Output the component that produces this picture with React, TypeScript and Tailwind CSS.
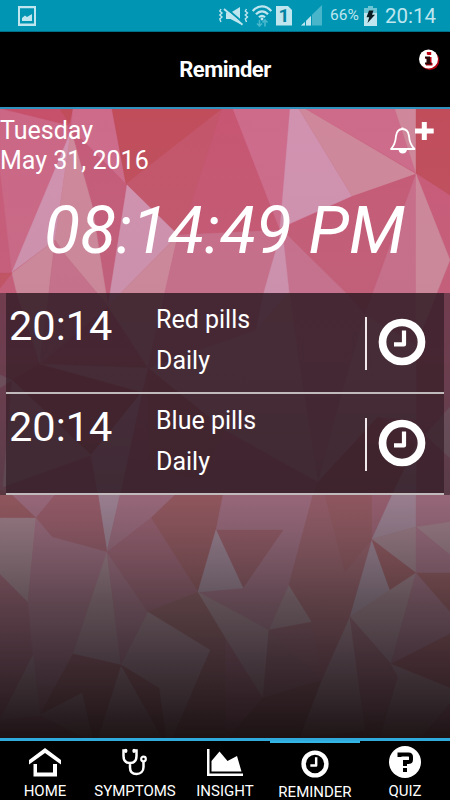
import React from 'react';

const RED = '#c14d5b';
const ROSE = '#c95a78';
const PINK = '#ce6b8b';
const GREY = '#cf889b';
const LILAC = '#d192b0';

// Facets of the low-poly wallpaper: [fill, points]
const facets: [string, string][] = [
  ['#cc6786', '0,109 67,125 70,135 12,273 0,170'],
  ['#c7506a', '5,109 60,109 68,125'],
  ['#c14d5b', '60,109 73,109 69,124'],
  [PINK, '73,109 112,109 126,184 71,128'],
  [RED, '112,109 222,109 126,184'],
  ['#c4556a', '222,109 126,184 178,235 188,214'],
  ['#c75672', '222,109 233,109 280,230 178,235 188,214'],
  ['#c55b79', '72,130 126,184 108,306 100,262'],
  [LILAC, '66,143 12,272 55,240 71,130'],
  [GREY, '71,130 92,205 108,306 66,256 55,240'],
  [GREY, '12,273 55,240 48,300 40,364 16,290'],
  ['#c44f5f', '0,273 12,273 0,288'],
  ['#c96f8b', '55,240 66,256 108,306 40,364 48,300'],
  [LILAC, '127,185 178,235 108,306'],
  [GREY, '178,235 108,306 148,368 165,292'],
  ['#c96d8a', '178,235 280,230 256,330 148,368 165,292'],
  [PINK, '233,109 290,109 280,230'],
  [LILAC, '290,109 299,109 352,196 280,228'],
  [GREY, '299,109 306,109 416,174 352,196'],
  [PINK, '306,109 395,109 416,173'],
  [GREY, '395,109 416,109 416,173'],
  [RED, '416,109 450,109 450,195 416,173'],
  ['#c65a76', '416,174 352,197 280,230 345,292 365,310'],
  ['#ca6d8a', '416,174 365,315 416,345'],
  [GREY, '416,174 450,260 416,345'],
  ['#c96f8d', '282,230 345,292 365,315 318,480 289,292'],
  [LILAC, '282,228 264,292 256,330 290,300'],
  [GREY, '256,330 289,292 305,400 318,482 225,430'],
  [GREY, '148,368 256,330 240,400 225,430'],
  ['#c4556a', '148,368 225,430 200,480 150,470'],
  [GREY, '365,315 378,417 318,482 350,365'],
  [GREY, '365,315 416,345 416,420 378,417'],
  [RED, '378,417 318,482 313,495 392,495 416,445'],
  [RED, '40,364 148,368 142,392 91,455 12,380'],
  [GREY, '40,364 148,368 142,392'],
  [GREY, '0,375 12,380 0,388'],
  [GREY, '12,380 91,455 3,487'],
  [LILAC, '142,392 91,455 98,495 107,552 120,495'],
  [GREY, '450,407 425,435 450,458'],
  [PINK, '10,495 55,495 36,518'],
  [RED, '0,490 12,495 36,518 0,518'],
  ['#c5526a', '55,495 98,495 107,552 52,537 36,518'],
  [GREY, '0,518 36,518 28,602 0,574'],
  [PINK, '36,518 52,537 107,552 73,654 40,715 33,655 28,602'],
  [PINK, '120,495 175,495 151,518 107,552'],
  [RED, '175,495 223,495 216,530 198,592 151,518'],
  [GREY, '107,552 121,665 73,654'],
  [PINK, '107,552 148,612 121,665'],
  [ROSE, '107,552 151,518 198,592 148,612'],
  ['#b95562', '148,612 198,592 225,637 225,738 172,738 210,650'],
  [GREY, '148,612 210,650 172,738 166,738 159,688 121,665'],
  [GREY, '121,665 98,738 162,738'],
  ['#b84e5e', '73,654 121,665 98,738 92,738 82,693 40,715'],
  ['#b84e5e', '121,665 159,688 166,738 162,738'],
  [GREY, '33,655 0,720 40,715'],
  [GREY, '82,693 40,715 85,738 92,738'],
  [PINK, '223,495 313,495 289,585 269,630 198,592 216,530'],
  ['#c25065', '216,530 283,530 243,588'],
  [LILAC, '216,530 198,592 243,588'],
  [GREY, '198,592 269,630 263,698 225,637'],
  ['#c4566a', '313,495 372,495 372,539 350,617 289,585'],
  ['#c14f5f', '325,495 372,495 372,539 345,572'],
  [GREY, '289,585 312,622 269,630'],
  ['#c25870', '269,630 312,622 322,680'],
  ['#c4566a', '289,585 350,617 322,680 312,622'],
  ['#bb5b72', '269,630 322,680 263,698'],
  ['#ad4857', '263,698 322,680 300,738 228,738'],
  [GREY, '350,617 365,730 300,738 322,680'],
  [ROSE, '372,495 392,495 372,539'],
  [LILAC, '392,495 416,445 416,527 372,539'],
  [GREY, '372,539 416,527 416,573'],
  [LILAC, '372,540 390,590 350,617'],
  [RED, '372,540 390,590 416,573'],
  [GREY, '416,573 390,590 350,617 391,664'],
  [PINK, '416,495 450,495 450,522 416,527'],
  [GREY, '416,527 450,522 450,555'],
  [PINK, '416,527 450,555 450,573 416,573'],
  [RED, '416,573 450,573 450,612'],
  [PINK, '416,573 450,612 450,634 391,664'],
  [RED, '450,634 391,664 450,688'],
  ['#c25c74', '350,617 391,664 398,677 380,738 365,730'],
  [GREY, '391,664 450,688 450,703 420,738 380,738 398,677'],
];

const reminders = [
  { time: '20:14', name: 'Red pills', repeat: 'Daily' },
  { time: '20:14', name: 'Blue pills', repeat: 'Daily' },
];

const Wallpaper: React.FC = () => (
  <svg
    className="absolute inset-0 h-full w-full"
    viewBox="0 109 450 629"
    preserveAspectRatio="none"
  >
    <defs>
      <linearGradient id="shade" gradientUnits="userSpaceOnUse" x1="0" y1="109" x2="0" y2="738">
        <stop offset="0" stopColor="#a89098" stopOpacity="0" />
        <stop offset="0.29" stopColor="#a08890" stopOpacity="0.12" />
        <stop offset="0.45" stopColor="#747c7c" stopOpacity="0.25" />
        <stop offset="0.62" stopColor="#4a5f5e" stopOpacity="0.43" />
        <stop offset="0.78" stopColor="#263331" stopOpacity="0.66" />
        <stop offset="0.87" stopColor="#222326" stopOpacity="0.8" />
        <stop offset="1" stopColor="#150f10" stopOpacity="0.95" />
      </linearGradient>
    </defs>
    <rect y="109" width="450" height="629" fill={ROSE} />
    {/* the stroke closes the hairline gaps between neighbours */}
    {facets.map(([fill, points]) => (
      <polygon key={points} points={points} fill={fill} stroke={fill} strokeWidth="0.4" />
    ))}
    <rect y="109" width="450" height="629" fill="url(#shade)" />
  </svg>
);

const ClockIcon: React.FC<{ className: string }> = ({ className }) => (
  <svg className={className} viewBox="0 0 48 48" fill="none" stroke="currentColor">
    <circle cx="24" cy="24" r="19.5" strokeWidth="7.7" />
    <path d="M26 12.6V26.4H16" strokeWidth="4.2" strokeLinejoin="round" />
  </svg>
);

const StatusBar: React.FC = () => (
  <div className="flex h-8 shrink-0 items-center border-b border-[#00708a] bg-[#0095b3] text-[#bfe6ee]">
    <svg className="ml-[18px] h-5 w-[18px]" viewBox="0 0 18 20">
      <path fill="currentColor" fillRule="evenodd" d="M0 0H18V20H0ZM2 2.2V17.6H16V2.2Z" />
      <path fill="currentColor" d="M4 15V12L7 9.5L9 11L14 8V15Z" />
    </svg>
    {/* muted, vibrating speaker */}
    <svg className="ml-[183px] h-5 w-[30px]" viewBox="0 0 30 20" fill="none" stroke="currentColor">
      <path
        strokeWidth="1.4"
        d="M2 3L.8 5L3 7L.8 9L3 11L.8 13L2 16M27.5 3L26.3 5L28.5 7L26.3 9L28.5 11L26.3 13L27.5 16"
      />
      <path fill="currentColor" stroke="none" d="M7 6.5V13H11.5L21 18V1L12 6.5Z" />
      <path stroke="#0095b3" strokeWidth="2" d="M7 2L25 17.5" />
      <path strokeWidth="1.8" d="M5 3L23.5 18.8" />
    </svg>
    <svg className="ml-[3px] h-[22px] w-5" viewBox="0 0 20 22" fill="none" stroke="currentColor">
      <path
        strokeWidth="2.2"
        d="M.7 6C6-.2 14-.2 19.3 6M4 9.3C7.5 5.3 12.5 5.3 16 9.3M7 12.3C9 10.3 11 10.3 13 12.3"
      />
      <circle cx="10" cy="14" r="1.4" fill="currentColor" stroke="none" />
      <path
        stroke="#48b8cd"
        strokeWidth="1.6"
        d="M7.5 15V21M5 18.5L7.5 21L10 18.5M13 21.5V15M10.5 17.5L13 15L15.5 17.5"
      />
    </svg>
    <div className="ml-1 flex h-5 w-4 items-center justify-center bg-[#bfe6ee] text-[19px] leading-none font-bold text-[#0083a2] [clip-path:polygon(0_0,72%_0,100%_22%,100%_100%,0_100%)]">
      1
    </div>
    <svg className="ml-[9px] h-[21px] w-[21px]" viewBox="0 0 21 21">
      <path fill="#48b5ca" d="M0 20.5L21 0V20.5Z" />
      <path fill="#0095b3" d="M4 0H5V21H4ZM10 0H11V21H10Z" />
      <path fill="currentColor" d="M0 20.5L4 17V20.5ZM5 20.5V16L10 11V20.5Z" />
    </svg>
    <span className="ml-2 w-[29px] pt-px text-[15.5px] leading-none whitespace-nowrap">66%</span>
    <svg className="ml-[5px] h-5 w-[13px]" viewBox="0 0 13 20">
      <path fill="#6cc5d5" d="M4 0H9V2H13V8H0V2H4Z" />
      <path fill="currentColor" d="M0 7H13V20H0Z" />
      <path fill="#0a1c22" d="M5 4.5H9.5L8 8.8H11L3.5 17L5.2 11.2H2.5Z" />
    </svg>
    <span className="ml-[8px] pt-px text-[20.5px] leading-none">20:14</span>
  </div>
);

const Header: React.FC = () => (
  <header className="relative flex h-[75px] shrink-0 items-center justify-center bg-black">
    <h1 className="text-[22px] leading-none font-bold tracking-[-0.5px] text-white">Reminder</h1>
    <svg className="absolute top-[17px] right-[10px] h-[22px] w-[22px]" viewBox="0 0 22 22">
      <circle cx="11.8" cy="11.5" r="9.5" fill="#b00010" />
      <circle cx="10.5" cy="10" r="9.5" fill="#fff" />
      <path fill="#c00010" d="M9.5 3H13.2V6H9.5ZM7.5 8H13.5V14H14.5V16.5H8V14H9.5V10H7.5Z" />
      <path fill="#28080a" d="M9.5 7.5H12V13.5H13.5V15.5H7V13.5H8.5V9.5H7V7.5Z" />
      <path fill="#c00010" d="M8.8 3H12V5.5H8.8Z" />
    </svg>
  </header>
);

const tabs = [
  {
    label: 'HOME',
    icon: (
      <svg className="h-[30px] w-8" viewBox="0 0 32 30" fill="#fff">
        <path d="M0 13L16 1L32 13V17.5L16 6L0 17.5Z" />
        <path d="M4.5 17H8V25.5H24V17H28V29.5H4.5Z" />
      </svg>
    ),
  },
  {
    label: 'SYMPTOMS',
    icon: (
      <svg className="mr-0.5 h-7 w-[26px]" viewBox="0 0 26 28" fill="none" stroke="#fff" strokeWidth="2.5">
        <path d="M6 2.5H2.5V8C2.5 12.5 5 15 9 15S15.5 12.5 15.5 8V2.5H12M9 15V19.5C9 24 11.5 26 15.500 26S22.500 23.500 22.500 19V13.500" />
        <circle cx="22.5" cy="11" r="2.3" strokeWidth="2.2" />
        <path strokeLinecap="round" strokeWidth="3.2" d="M4.8 2.3V3.3M13 2.3V3.3" />
      </svg>
    ),
  },
  {
    label: 'INSIGHT',
    icon: (
      <svg className="h-[27px] w-9" viewBox="0 0 36 27" fill="#fff">
        <path d="M0 0H2.5V24.5H36V27H0Z" />
        <path d="M4.5 12L12.5 2.5L20.5 12L30 7L34.5 22.5H4.5Z" />
      </svg>
    ),
  },
  { label: 'REMINDER', icon: <ClockIcon className="h-7 w-7 text-white" /> },
  {
    label: 'QUIZ',
    icon: (
      <svg className="h-8 w-8" viewBox="0 0 32 32">
        <circle cx="16" cy="16" r="16" fill="#fff" />
        <path
          fill="none"
          stroke="#000"
          strokeWidth="4"
          d="M10.5 11V8.5H19.5Q22 8.5 22 11V13.5Q22 16 19.5 16H16V20"
        />
        <path d="M14 22H18V26H14Z" />
      </svg>
    ),
  },
];

const TabBar: React.FC = () => (
  <nav className="grid h-[62px] shrink-0 grid-cols-5 border-t-[3px] border-[#30aada] bg-black">
    {tabs.map(({ label, icon }) => {
      const active = label === 'REMINDER';
      return (
        <div
          key={label}
          className={`flex flex-col items-center ${active ? 'border-t-2 border-[#33b5e5]' : ''}`}
        >
          <div className="flex h-[42px] items-center justify-center">{icon}</div>
          <span className={`text-[15px] leading-[18px] text-white ${active ? '-mt-0.5' : '-mt-px'}`}>
            {label}
          </span>
        </div>
      );
    })}
  </nav>
);

const App: React.FC = () => {
  return (
    <div className="flex h-[800px] w-[450px] flex-col overflow-hidden bg-black font-['Roboto',sans-serif]">
      <StatusBar />
      <Header />
      <main className="relative flex-1 overflow-hidden border-t-2 border-[#3193bd]">
        <Wallpaper />
        <div className="relative text-white">
          <div className="flex h-[68px] justify-between">
            <div className="pt-[7px] text-[25px] leading-[30px]">
              <p>Tuesday</p>
              <p>May 31, 2016</p>
            </div>
            {/* add reminder */}
            <svg className="mt-3 mr-[15px] h-[34px] w-[46px]" viewBox="0 0 46 34" fill="none" stroke="#fff">
              <path
                strokeWidth="1.8"
                strokeLinejoin="round"
                d="M2 28Q6.5 23 7 15Q8 8 13.5 8T20 15Q20.5 23 25.5 28Z"
              />
              <path strokeWidth="2" d="M13.5 6.5V8.5" />
              <path fill="#fff" stroke="none" d="M9.5 28.5H18Q17.5 32.5 13.7 32.5T9.5 28.5Z" />
              <path strokeWidth="5" d="M26 10H44.7M35.3 1V19" />
            </svg>
          </div>
          <p className="h-[116px] pt-[14px] pl-[44px] text-[66.2px] leading-[80px] whitespace-nowrap italic">
            08:14:49 PM
          </p>
          <ul className="bg-[#241c26]/52 px-1.5">
            {reminders.map((reminder) => (
              <li
                key={reminder.name}
                className="flex h-[101px] border-b-2 border-[#c1babd] bg-[#301a23]/66"
              >
                <span className="w-[150px] pt-[8px] pl-[3px] text-[41.5px] leading-[50px]">
                  {reminder.time}
                </span>
                <div className="flex-1 pt-[6px] text-[25px] leading-[41px]">
                  <p>{reminder.name}</p>
                  <p>{reminder.repeat}</p>
                </div>
                <div className="mt-6 h-[53px] w-[2px] bg-[#f0e8ea]" />
                <ClockIcon className="mt-[25px] mr-[18px] ml-[11px] h-12 w-12" />
              </li>
            ))}
          </ul>
        </div>
      </main>
      <TabBar />
    </div>
  );
};

export default App;
